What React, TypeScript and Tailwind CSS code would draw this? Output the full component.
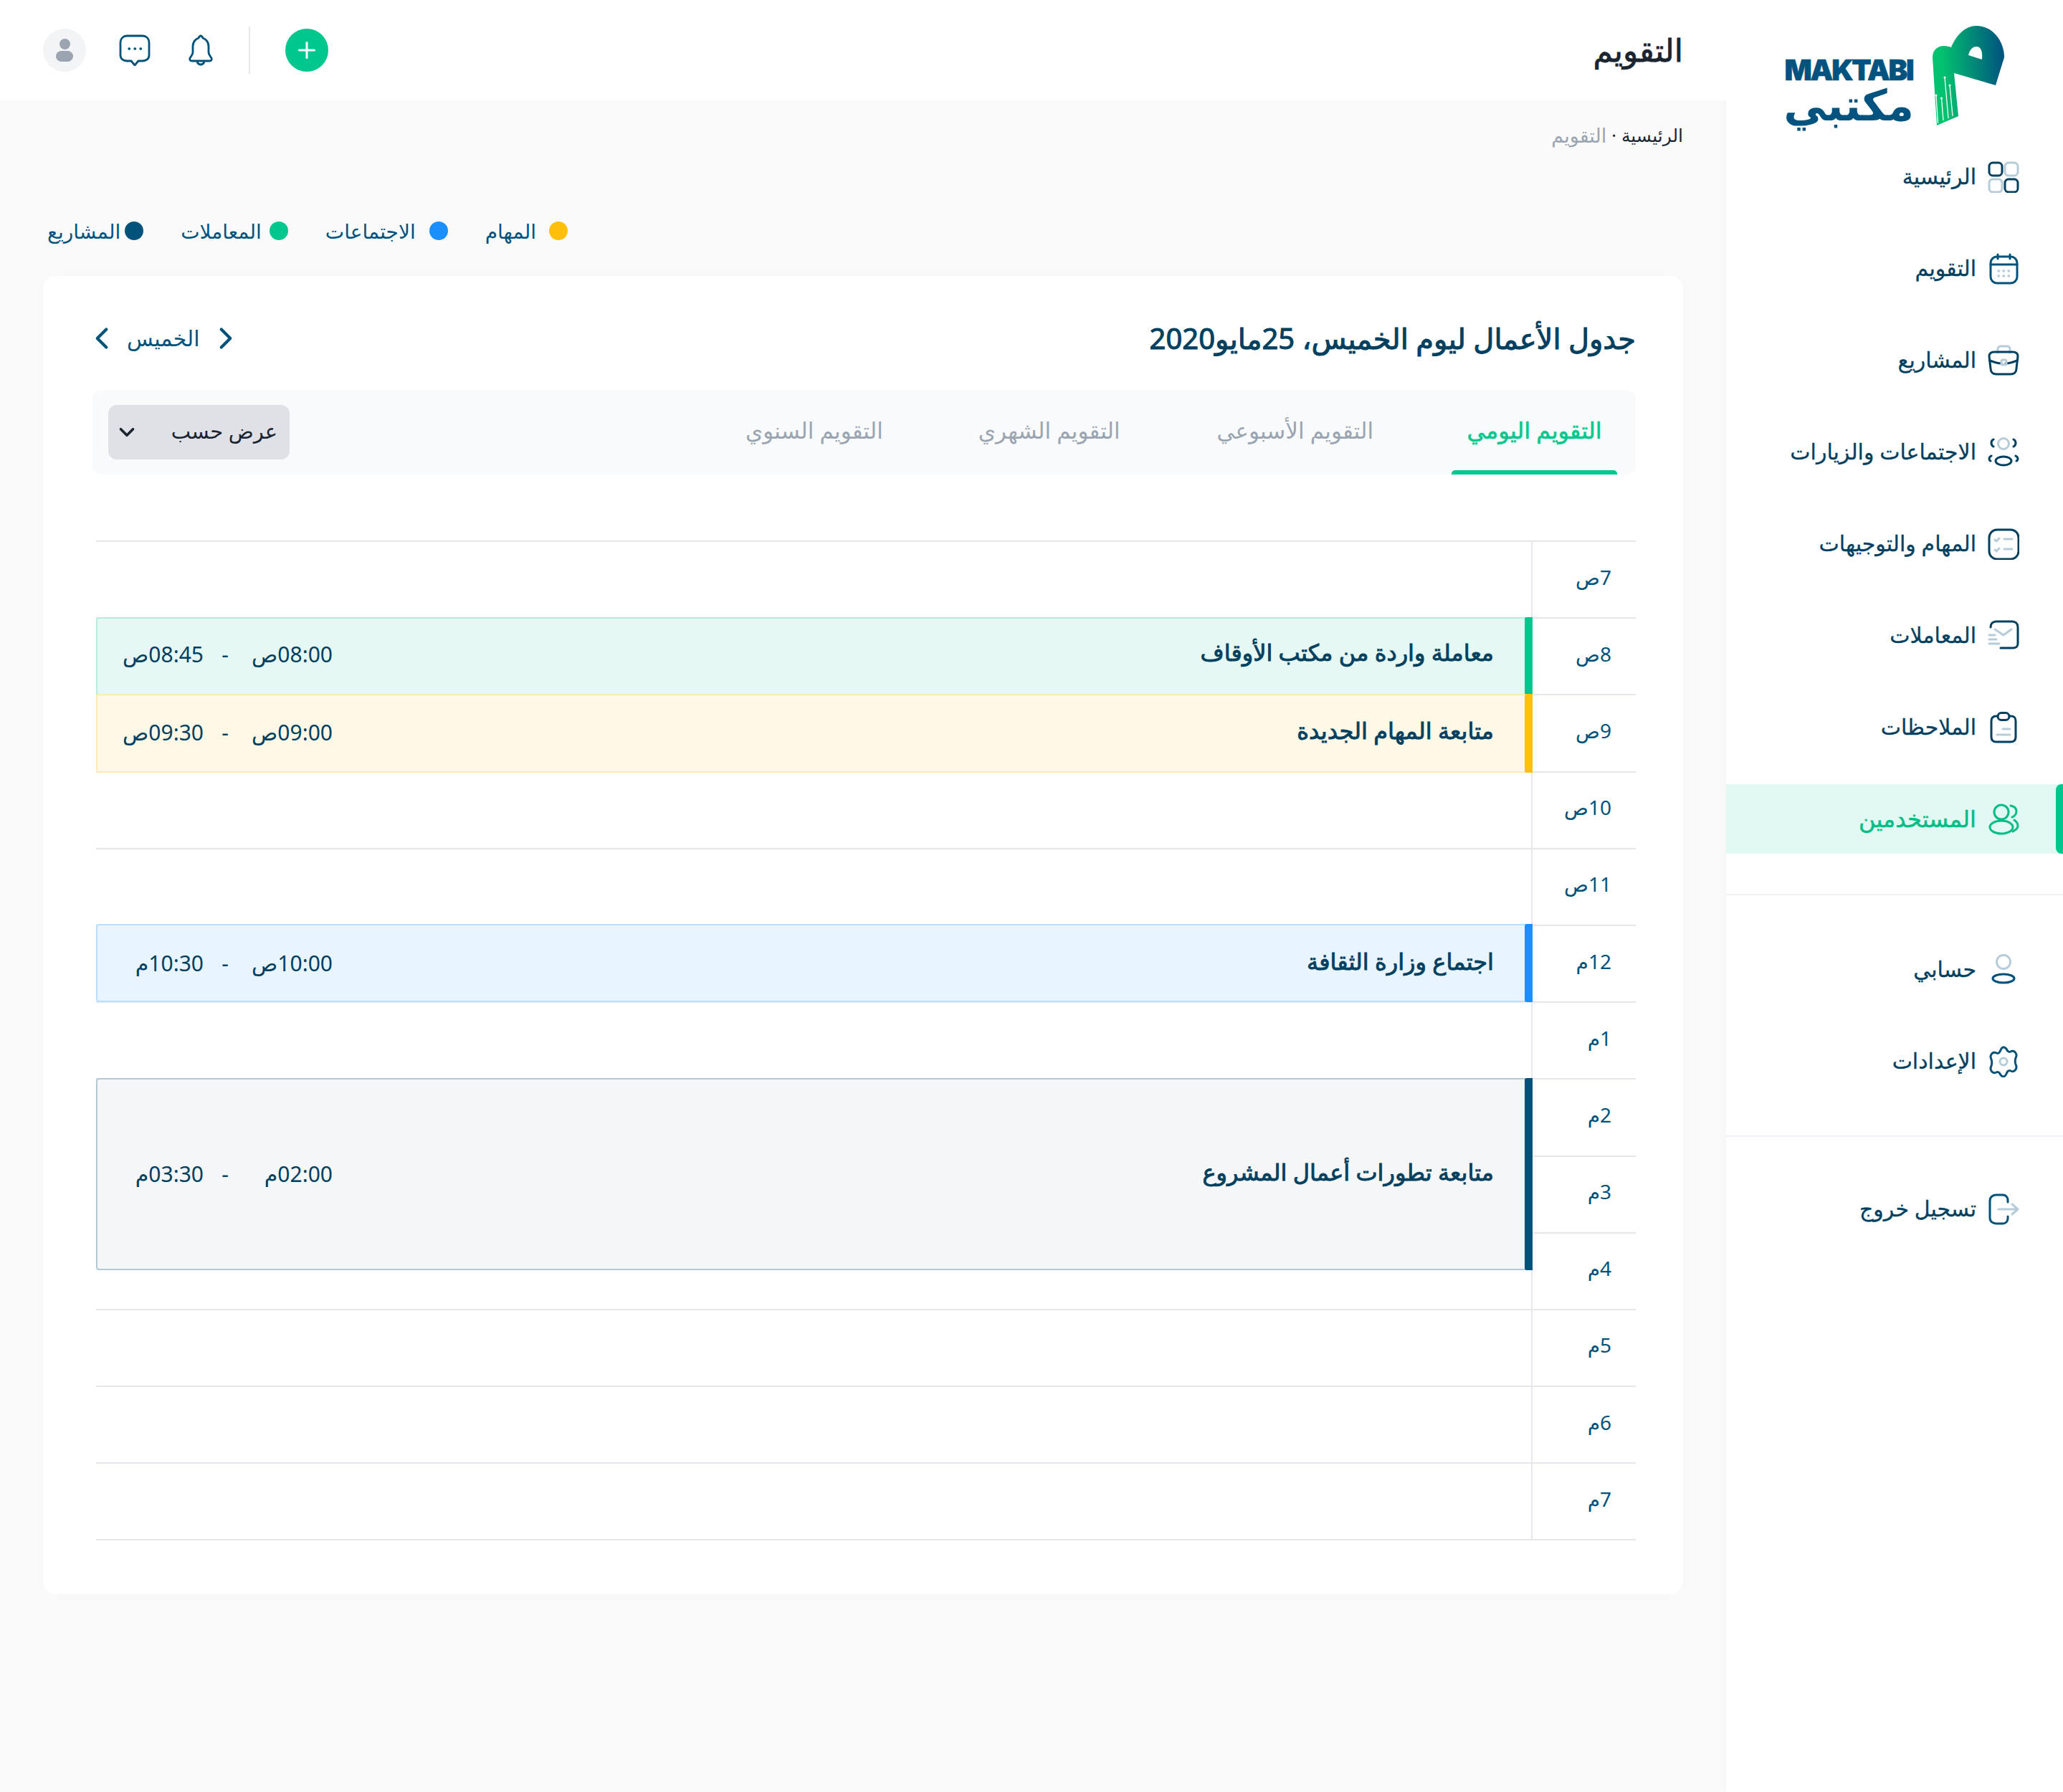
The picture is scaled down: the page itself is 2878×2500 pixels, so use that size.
import type { ReactNode } from 'react';
import { ChevronDown, ChevronLeft, ChevronRight, Plus } from 'lucide-react';

const DARK = '#00405f';
const LIGHT = '#b6ccd9';
const BLUE = '#00527a';

function Ico({ children, green }: { readonly children: ReactNode; readonly green?: boolean }) {
  return (
    <svg
      viewBox="0 0 44 44"
      fill="none"
      strokeWidth="3"
      strokeLinecap="round"
      strokeLinejoin="round"
      stroke={green ? '#00bd86' : DARK}
      className="h-[44px] w-[44px] shrink-0"
    >
      {children}
    </svg>
  );
}

const navTop = [
  {
    label: 'الرئيسية',
    icon: (
      <Ico>
        <rect x="2" y="2" width="18" height="18" rx="5" />
        <rect x="24" y="2" width="18" height="18" rx="5" stroke={LIGHT} />
        <rect x="2" y="25" width="18" height="18" rx="5" stroke={LIGHT} />
        <rect x="24" y="25" width="18" height="18" rx="5" />
      </Ico>
    ),
  },
  {
    label: 'التقويم',
    icon: (
      <Ico>
        <g stroke={BLUE}>
          <rect x="4" y="5" width="37" height="37" rx="9" />
          <path d="M4 16h37M14 2v6M31 2v6" />
        </g>
        <g stroke={LIGHT} strokeWidth="3.6">
          <path d="M15 25h.5M22 25h.5M29 25h.5M15 32h.5M22 32h.5M29 32h.5" />
        </g>
      </Ico>
    ),
  },
  {
    label: 'المشاريع',
    icon: (
      <Ico>
        <path d="M14 11V6a4 4 0 0 1 4-4h9a4 4 0 0 1 4 4v5" stroke={LIGHT} />
        <path d="M9 10h26c4 0 7 2 7 6l-2 17c0 5-3 8-8 8H12c-5 0-8-3-8-8L2 16c0-4 3-6 7-6Z" />
        <path d="M3 22c5 2 11 4 16 4M41 22c-5 2-11 4-16 4" />
        <rect x="19" y="21" width="7" height="7" rx="2" stroke={LIGHT} />
      </Ico>
    ),
  },
  {
    label: 'الاجتماعات والزيارات',
    icon: (
      <Ico>
        <circle cx="22" cy="10" r="7.5" stroke={LIGHT} />
        <ellipse cx="22" cy="34" rx="11" ry="6" />
        <path d="M8 4c-2 1-3 3-3 5s1 4 3 5M36 4c2 1 3 3 3 5s-1 4-3 5M5 27c-2 1-3 3-3 4s1 3 2 3M39 27c2 1 3 3 3 4s-1 3-2 3" />
      </Ico>
    ),
  },
  {
    label: 'المهام والتوجيهات',
    icon: (
      <Ico>
        <rect x="2" y="2" width="41" height="41" rx="11" />
        <g stroke={LIGHT}>
          <path d="M23 15h11M23 29h11M10 16l2 2 4-4M10 30l2 2 4-4" />
        </g>
      </Ico>
    ),
  },
  {
    label: 'المعاملات',
    icon: (
      <Ico>
        <path d="M4 10c0-5 3-8 8-8h22c5 0 8 3 8 8v23c0 4-3 6-7 6H18" />
        <g stroke={LIGHT}>
          <path d="M10 13l12 8 11-8M2 21h8M2 27h10M2 33h14" />
        </g>
      </Ico>
    ),
  },
  {
    label: 'الملاحظات',
    icon: (
      <Ico>
        <path d="M14 6h-2c-5 0-7 3-7 7v22c0 5 3 7 7 7h20c5 0 7-3 7-7V13c0-5-2-7-7-7h-2" />
        <rect x="14" y="1.5" width="16" height="10" rx="5" />
        <g stroke={LIGHT}>
          <path d="M21 24h10M13 32h18" />
        </g>
      </Ico>
    ),
  },
];

const navBottom = [
  {
    label: 'حسابي',
    icon: (
      <Ico>
        <circle cx="22" cy="11" r="9.5" stroke={LIGHT} />
        <ellipse cx="22" cy="34" rx="15" ry="6" stroke={BLUE} />
      </Ico>
    ),
  },
  {
    label: 'الإعدادات',
    icon: (
      <Ico>
        <path
          stroke={BLUE}
          d="M22 2c3 0 4 2 5 4s3 3 5 2 5-1 7 2 1 5 0 7-1 7 0 9 2 4 0 7-5 3-7 2-4 0-5 2-2 6-5 6-4-2-5-4-3-3-5-2-5 1-7-2-1-5 0-7 1-7 0-9-2-4 0-7 5-3 7-2 4 0 5-2 2-6 5-6Z"
        />
        <circle cx="22" cy="22" r="5" stroke={LIGHT} />
      </Ico>
    ),
  },
];

const legend = [
  { label: 'المهام', dot: 'bg-[#ffbf0b]', gap: 'gap-[18px]' },
  { label: 'الاجتماعات', dot: 'bg-[#1a90ff]', gap: 'gap-[19px]' },
  { label: 'المعاملات', dot: 'bg-[#00c78e]', gap: 'gap-[11px]' },
  { label: 'المشاريع', dot: 'bg-[#00527a]', gap: 'gap-[6px]' },
];

const hours = ['7ص', '8ص', '9ص', '10ص', '11ص', '12م', '1م', '2م', '3م', '4م', '5م', '6م', '7م'];

const events = [
  {
    title: 'معاملة واردة من مكتب الأوقاف',
    from: '08:00ص',
    to: '08:45ص',
    top: 'top-[107px]',
    height: 'h-[109px]',
    box: 'bg-[#e6f8f3] border-[#b6eddc] pb-[5px]',
    bar: 'bg-[#00c78e]',
  },
  {
    title: 'متابعة المهام الجديدة',
    from: '09:00ص',
    to: '09:30ص',
    top: 'top-[214px]',
    height: 'h-[110px]',
    box: 'bg-[#fff8e6] border-[#ffecb5] pb-[2px]',
    bar: 'bg-[#ffc107]',
  },
  {
    title: 'اجتماع وزارة الثقافة',
    from: '10:00ص',
    to: '10:30م',
    top: 'top-[535px]',
    height: 'h-[109px]',
    box: 'bg-[#e8f4ff] border-[#bbdfff]',
    bar: 'bg-[#1a90ff]',
  },
  {
    title: 'متابعة تطورات أعمال المشروع',
    from: '02:00م',
    to: '03:30م',
    top: 'top-[750px]',
    height: 'h-[268px]',
    box: 'bg-[#f4f6f8] border-[#b3c9d6]',
    bar: 'bg-[#00527a]',
  },
];

function NavRow({
  label,
  icon,
  active,
}: {
  readonly label: string;
  readonly icon: ReactNode;
  readonly active?: boolean;
}) {
  return (
    <div
      className={`relative flex h-[97px] items-center gap-[16px] pr-[61px] ${
        active
          ? 'bg-[#e2f8f2] text-[32px] text-[#00bd86] [-webkit-text-stroke:0.5px]'
          : 'text-[30px] text-[#00405f] [-webkit-text-stroke:0.3px]'
      }`}
    >
      {icon}
      <span className="pb-[2px] leading-none">{label}</span>
      {active && (
        <span className="absolute inset-y-0 right-0 w-[10px] rounded-l-[8px] bg-[#00c78e]" />
      )}
    </div>
  );
}

function Logo() {
  return (
    <div dir="ltr" className="flex h-[198px] items-start pl-[83px] pt-[36px]">
      <div className="mt-[47px] flex w-[176px] flex-col items-center font-black text-[#00527f]">
        <span className="font-['Inter',sans-serif] text-[40px] leading-[29px] tracking-[-2.2px] [-webkit-text-stroke:0.6px]">
          MAKTABI
        </span>
        <span className="mt-[8px] text-[60px] leading-[50px]">مكتبي</span>
      </div>
      <svg viewBox="0 0 100 140" className="ml-[29px] h-[140px] w-[100px]">
        <defs>
          <linearGradient id="mk" x1="0" y1="0.3" x2="1" y2="0.2">
            <stop offset="0.12" stopColor="#03c26f" />
            <stop offset="1" stopColor="#00517f" />
          </linearGradient>
        </defs>
        <path
          fill="url(#mk)"
          fillRule="evenodd"
          d="M6 139 0 44C0 34 7 28 16 28c4 0 7 1 10 2C34 11 47 0 61 0c22 0 39 20 39 44L88 83 30 66l6 60ZM50 41c2-8 6-12 11-12 7 0 9 7 8 18Z"
        />
        <g stroke="#fff" strokeWidth="1.3">
          <path d="M5 97l2.5 39M12.5 101l2.5 31M17 72l5 57M24 83l4 43" />
        </g>
        <g fill="#fff">
          <circle cx="5" cy="97" r="1.5" />
          <circle cx="12.5" cy="101" r="1.5" />
          <circle cx="17" cy="72" r="1.5" />
          <circle cx="24" cy="83" r="1.5" />
        </g>
      </svg>
    </div>
  );
}

export default function App() {
  return (
    <div
      dir="rtl"
      className="flex h-[2500px] w-[2878px] font-['Noto_Sans','DejaVu_Sans',sans-serif] bg-[#fafafa]"
    >
      <aside className="w-[470px] shrink-0 bg-white shadow-[0_0_16px_rgba(0,0,0,0.03)]">
        <Logo />
        <div className="flex flex-col gap-[31px]">
          {navTop.map((item) => (
            <NavRow key={item.label} {...item} />
          ))}
          <NavRow
            label="المستخدمين"
            active
            icon={
              <Ico green>
                <circle cx="19" cy="12" r="10" />
                <ellipse cx="19" cy="33" rx="16" ry="9" />
                <path d="M32 3c5 1 8 4 8 8s-3 7-6 8M37 23c3 2 5 5 5 8s-3 6-7 8" />
              </Ico>
            }
          />
        </div>
        <div className="mt-[56px] h-[2px] bg-[#eef2f6]" />
        <div className="mt-[55px] flex flex-col gap-[31px]">
          {navBottom.map((item) => (
            <NavRow key={item.label} {...item} />
          ))}
        </div>
        <div className="mt-[55px] h-[2px] bg-[#eef2f6]" />
        <div className="mt-[52px]">
          <NavRow
            label="تسجيل خروج"
            icon={
              <Ico>
                <path stroke={BLUE} d="M28 12V9c0-4-3-7-7-7h-9C7 2 3 5 3 10v24c0 5 4 8 9 8h9c4 0 7-3 7-7v-3" />
                <path stroke={LIGHT} d="M15 22h26M34 15l8 7-8 7" />
              </Ico>
            }
          />
        </div>
      </aside>

      <main className="min-w-0 flex-1">
        <header className="flex h-[140px] items-center justify-between bg-white pl-[60px] pr-[60px]">
          <h1 className="pb-[2px] text-[44px] leading-none text-[#1b2530] [-webkit-text-stroke:0.8px]">التقويم</h1>
          <div className="flex items-center">
            <span className="flex h-[60px] w-[60px] items-center justify-center rounded-full bg-[#00c78e]">
              <Plus className="h-[36px] w-[36px] text-white" strokeWidth={2} />
            </span>
            <span className="mx-[49px] h-[66px] w-[2px] bg-[#e5e7eb]" />
            <svg viewBox="0 0 36 44" fill="none" stroke={BLUE} strokeWidth="2.8" className="h-[44px] w-[36px]">
              <path strokeLinejoin="round" d="M18 2c-1 0-2 1-3 3C10 7 7 11 7 17v8c0 3-2 5-4 8-1 2 0 4 3 4h24c3 0 4-2 3-4-2-3-4-5-4-8v-8c0-6-3-10-8-12-1-2-2-3-3-3Z" />
              <path d="M13 38c1 3 3 4 5 4s4-1 5-4" />
            </svg>
            <svg viewBox="0 0 44 44" fill="none" stroke={BLUE} strokeWidth="2.8" className="mr-[52px] h-[44px] w-[44px]">
              <path strokeLinejoin="round" d="M11 2h22c5 0 9 4 9 9v18c0 5-4 8-9 8h-6l-5 6-5-6h-6c-5 0-9-3-9-8V11c0-5 4-9 9-9Z" />
              <path strokeLinecap="round" strokeWidth="3.4" d="M14 20h.5M22 20h.5M30 20h.5" />
            </svg>
            <span className="mr-[46px] flex h-[60px] w-[60px] flex-col items-center justify-center gap-[2px] rounded-full bg-[#f3f4f6]">
              <span className="h-[15px] w-[15px] rounded-full bg-[#9aa5b1]" />
              <span className="h-[15px] w-[24px] rounded-full bg-[#9aa5b1]" />
            </span>
          </div>
        </header>

        <div className="px-[60px]">
          <div className="flex h-[97px] items-center gap-[7px] text-[25px] leading-none">
            <span className="text-[#1b2530]">الرئيسية</span>
            <span className="text-[#1b2530]">·</span>
            <span className="text-[27px] text-[#9aa5b1]">التقويم</span>
          </div>

          <div className="flex h-[148px] items-center justify-end gap-[52px] pl-[6px] pt-[22px] text-[28px] leading-none text-[#00527a]">
            {legend.map((item) => (
              <div key={item.label} className={`flex items-center ${item.gap}`}>
                <span className={`h-[26px] w-[26px] rounded-full ${item.dot}`} />
                {item.label}
              </div>
            ))}
          </div>

          <section className="h-[1839px] rounded-[18px] bg-white pl-[69px] pr-[66px] pt-[50px] shadow-[0_0_20px_rgba(0,0,0,0.02)]">
            <div className="flex h-[74px] items-center justify-between">
              <h2 className="text-[40px] leading-none text-[#00405f] [-webkit-text-stroke:1px]">
                جدول الأعمال ليوم الخميس، 25مايو2020
              </h2>
              <div className="flex items-center gap-[10px] text-[30px] leading-none text-[#00527a]">
                <ChevronRight className="ml-[2px] h-[50px] w-[50px]" strokeWidth={2} />
                الخميس
                <ChevronLeft className="-ml-[12px] h-[50px] w-[50px]" strokeWidth={2} />
              </div>
            </div>

            <div className="mt-[35px] flex h-[118px] items-stretch justify-between rounded-[12px] bg-[#f9fafb] pl-[22px] pr-[26px]">
              <div className="flex">
                <div className="relative flex w-[231px] items-center justify-center pb-[6px] text-[32px] text-[#00c78e] [-webkit-text-stroke:0.6px]">
                  التقويم اليومي
                  <span className="absolute inset-x-0 bottom-0 h-[6px] rounded-t-[5px] bg-[#00c78e]" />
                </div>
                <div className="mr-[109px] flex items-center pb-[6px] text-[31px] text-[#9aa5b1]">التقويم الأسبوعي</div>
                <div className="mr-[135px] flex items-center pb-[6px] text-[31px] text-[#9aa5b1]">التقويم الشهري</div>
                <div className="mr-[133px] flex items-center pb-[6px] text-[31px] text-[#9aa5b1]">التقويم السنوي</div>
              </div>
              <div className="my-auto flex h-[76px] w-[253px] items-center justify-between rounded-[12px] bg-[#dfe1e6] pl-[9px] pr-[17px] text-[29px] text-[#1b2530]">
                <span className="pb-[4px]">عرض حسب</span>
                <ChevronDown className="h-[34px] w-[34px]" strokeWidth={2.6} />
              </div>
            </div>

            <div className="relative ml-[5px] mt-[92px] border-b-2 border-[#e5e7eb]">
              {hours.map((hour) => (
                <div key={hour} className="flex h-[107.2px] border-t-2 border-[#e5e7eb]">
                  <div className="flex w-[144px] items-center justify-start pb-[8px] pr-[34px] text-[28px] text-[#00527a]">
                    {hour}
                  </div>
                  <div className="flex-1 border-r-2 border-[#e5e7eb]" />
                </div>
              ))}
              {events.map((event) => (
                <div
                  key={event.title}
                  className={`absolute left-0 right-[144px] flex items-center justify-between rounded-[4px] border-2 pl-[28px] pr-[52px] ${event.top} ${event.height} ${event.box}`}
                >
                  <span className="pb-[6px] text-[32px] leading-none text-[#00405f] [-webkit-text-stroke:0.9px]">
                    {event.title}
                  </span>
                  <span className="flex text-[30px] leading-none text-[#00405f]">
                    <span className="w-[120px]">{event.from}</span>
                    <span className="w-[60px] text-center">-</span>
                    <span className="w-[120px]">{event.to}</span>
                  </span>
                  <span className={`absolute inset-y-[-2px] right-[-2px] w-[11px] rounded-l-[3px] ${event.bar}`} />
                </div>
              ))}
            </div>
          </section>
        </div>
      </main>
    </div>
  );
}
